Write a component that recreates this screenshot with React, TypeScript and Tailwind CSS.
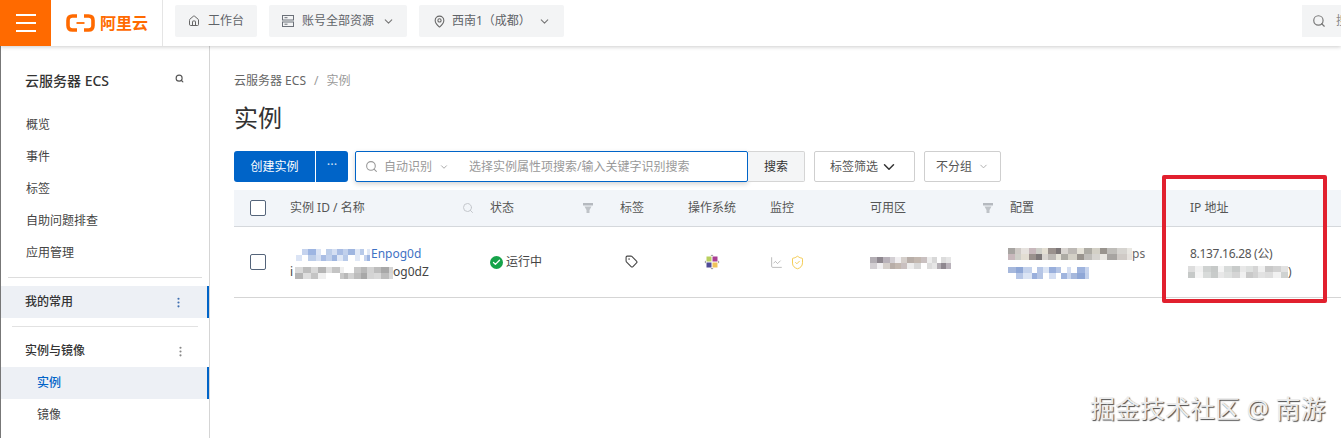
import React from 'react';
import { ChevronDown, EllipsisVertical, House, MapPin, Search, Tag, ChartLine, ShieldCheck, Check } from 'lucide-react';

const FONT = "font-['Noto_Sans','Noto_Sans_CJK_SC',sans-serif]";

type Cell = [number, string];

// pixelated patches that cover the private values in the screenshot
const Mosaic = ({ cells }: { cells: Cell[] }) => {
  const shifted = cells.map(([w], i) => [w, cells[(i + 3) % cells.length][1]] as Cell);
  return (
    <span className="inline-flex flex-col blur-[0.6px] align-middle">
      {[cells, shifted].map((row, r) => (
        <span key={r} className="flex">
          {row.map(([w, c], i) => (
            <span key={i} className="h-[6px]" style={{ width: w, backgroundColor: c }} />
          ))}
        </span>
      ))}
    </span>
  );
};

const nameCells: Cell[] = [
  [6, '#fff'], [6, '#c5d3ee'], [8, '#9db5e2'], [5, '#dbe4f5'], [5, '#fff'], [6, '#bccde9'], [5, '#d5dff2'], [6, '#a9bde4'], [5, '#c2d1ec'], [7, '#9fb6e0'], [5, '#e0e8f6'], [4, '#b8cae9'], [3, '#fff'], [3, '#e0e8f6'],
];
const idCells: Cell[] = [
  [8, '#d9d9d9'], [8, '#bdbdbd'], [7, '#d8d8d8'], [8, '#b5b5b5'], [6, '#dedede'], [8, '#c4c4c4'], [4, '#efefef'], [4, '#fff'], [6, '#fff'], [7, '#c8c8c8'], [6, '#b8b8b8'], [7, '#d2d2d2'], [7, '#bdbdbd'], [8, '#a8a8a8'], [4, '#d4d4d4'],
];
const zoneCells: Cell[] = [
  [7, '#b3aeb4'], [6, '#8e878f'], [7, '#b9b2ba'], [5, '#d3cfd3'], [6, '#f1eff1'], [6, '#d5cfcb'], [7, '#b8aea8'], [7, '#c3b8b0'], [6, '#c9c0c0'], [5, '#ededed'], [5, '#d8d8d8'], [4, '#fff'], [5, '#dcdcdc'], [5, '#e6e6e6'],
];
const configCells: Cell[] = [
  [7, '#a7a4a1'], [6, '#cfcac6'], [8, '#e6e2de'], [7, '#c8b8bc'], [6, '#cfcfc9'], [6, '#e3ded3'], [8, '#9a918d'], [5, '#7d7778'], [7, '#d8d4d0'], [9, '#bdb9b5'], [7, '#e5e2d8'], [8, '#adaba4'], [8, '#d3d0c6'], [7, '#99948e'], [10, '#bfbdb9'], [10, '#d6d4d0'], [5, '#e9e7e2'],
];
const configCells2: Cell[] = [
  [8, '#a6b8dc'], [7, '#8fa7d6'], [9, '#c4d2ec'], [5, '#fff'], [6, '#b6c6e6'], [6, '#dbe4f4'], [7, '#99afdc'], [5, '#b5c5e5'], [6, '#fff'], [4, '#d4def2'], [6, '#fff'], [8, '#9fb4de'], [4, '#c8d5ee'],
];
const ipCells: Cell[] = [
  [7, '#dddddd'], [8, '#f1f1f1'], [8, '#cfd2d1'], [7, '#c6c9c8'], [6, '#f5f5f5'], [8, '#d8dbda'], [8, '#c8cbca'], [6, '#e8e8e8'], [7, '#dfe1e0'], [5, '#d5d5d5'], [7, '#f0f0f0'], [8, '#c9c9c9'], [8, '#d2d2d2'], [7, '#e2e2e2'],
];

const Funnel = () => (
  <svg width="12" height="12" viewBox="0 0 12 12" className="shrink-0">
    <path d="M1 1h10v2.5H1z" fill="#b5b9bf" />
    <path d="M2.500 4.500h7L7.500 8v3h-3V8z" fill="#bfc3c8" />
  </svg>
);

const ServerGlyph = () => (
  <svg width="14" height="14" viewBox="0 0 14 14" fill="none" stroke="#6b7078" strokeWidth="1">
    <rect x="1.500" y="1.500" width="11" height="4.500" />
    <rect x="1.500" y="8" width="11" height="4.500" />
    <path d="M3.500 3.700h3M3.500 10.200h3" />
  </svg>
);

const CentosGlyph = () => (
  <svg width="16" height="16" viewBox="0 0 16 16">
    <path d="M8 0.500l1.500 1.500h-3z M8 15.500l1.500-1.500h-3z M0.500 8l1.500-1.500v3z M15.500 8l-1.500-1.500v3z" fill="#9a9a9a" />
    <rect x="2.500" y="2.500" width="5" height="5" fill="#b9cf5e" />
    <rect x="8.500" y="2.500" width="5" height="5" fill="#a93f93" />
    <rect x="2.500" y="8.500" width="5" height="5" fill="#4f4a96" />
    <rect x="8.500" y="8.500" width="5" height="5" fill="#efc35a" />
  </svg>
);

const Logo = () => (
  <div className="flex items-center gap-[5px] text-[#ff6a00]">
    <svg width="29" height="18" viewBox="0 0 29 18" fill="none" stroke="currentColor" strokeWidth="3.600">
      <path d="M11 2H6.500Q2 2 2 6.500v5Q2 16 6.500 16H11" />
      <path d="M18 2h4.500Q27 2 27 6.500v5Q27 16 22.500 16H18" />
      <path d="M10.500 9h8" strokeWidth="1.800" />
    </svg>
    <span className="text-base leading-none font-bold">阿里云</span>
  </div>
);

const TopButton = ({ icon, label, chevron, className }: { icon: React.ReactNode; label: string; chevron?: boolean; className: string }) => (
  <div className={`h-8 flex items-center bg-[#f3f4f5] rounded-[2px] text-xs text-[#5f6368] ${className}`}>
    {icon}
    <span>{label}</span>
    {chevron && <ChevronDown size={13} className="ml-auto text-[#777]" />}
  </div>
);

const SideItem = ({ label }: { label: string }) => (
  <div className="h-8 pl-[25px] flex items-center text-xs text-[#444]">{label}</div>
);

const Sidebar = () => (
  <aside className="w-[210px] shrink-0 border-r border-[#d5d5d5] border-l border-l-[#777] pt-5">
    <div className="h-[30px] pl-6 pr-[25px] flex items-center justify-between">
      <span className="text-sm font-medium text-[#333]">云服务器 ECS</span>
      <Search size={9} strokeWidth={3} className="text-[#555] -translate-y-[3px]" />
    </div>
    <div className="mt-[13px]">
      <SideItem label="概览" />
      <SideItem label="事件" />
      <SideItem label="标签" />
      <SideItem label="自助问题排查" />
      <SideItem label="应用管理" />
    </div>
    <div className="mt-2 mx-[7px] border-t border-[#ddd]" />
    <div className="mt-2 h-8 pl-6 pr-[22px] flex items-center justify-between bg-[#edf0f5] border-r-2 border-[#0064c8] text-xs font-medium text-[#333]">
      <span>我的常用</span>
      <EllipsisVertical size={13} className="text-[#3f6fb0]" />
    </div>
    <div className="mt-2 mx-[11px] border-t border-[#e2e2e2]" />
    <div className="mt-2 h-8 pl-6 pr-[22px] flex items-center justify-between text-xs font-medium text-[#333]">
      <span>实例与镜像</span>
      <EllipsisVertical size={13} className="text-[#888]" />
    </div>
    <div className="h-8 pl-9 flex items-center bg-[#edf0f5] border-r-2 border-[#0064c8] text-xs font-medium text-[#0064c8]">实例</div>
    <div className="h-8 pl-9 flex items-center text-xs text-[#444]">镜像</div>
  </aside>
);

const Toolbar = () => (
  <div className="mt-[15px] h-[31px] flex text-xs">
    <div className="w-[81px] bg-[#0064c8] rounded-l-[3px] flex items-center justify-center text-white">创建实例</div>
    <div className="ml-px w-[32px] bg-[#0064c8] rounded-r-[3px] flex items-center justify-center text-[#cfe0f5] text-[13px] leading-none pb-1">···</div>
    <div className="ml-[7px] w-[393px] bg-white border border-[#0064c8] rounded-[2px] shadow-[0_2px_5px_rgba(0,0,0,0.18)] flex items-center text-[#999]">
      <Search size={13} className="ml-[9px] text-[#999]" />
      <span className="ml-[6px]">自动识别</span>
      <ChevronDown size={10} className="ml-[7px]" />
      <span className="ml-[20px]">选择实例属性项搜索/输入关键字识别搜索</span>
    </div>
    <div className="w-[57px] bg-[#f4f5f6] border border-[#d5d5d5] border-l-0 rounded-r-[2px] flex items-center justify-center text-[#333]">搜索</div>
    <div className="ml-[9px] w-[101px] pl-[15px] border border-[#cfcfcf] rounded-[2px] flex items-center gap-[1px] text-[#555]">
      标签筛选
      <ChevronDown size={18} className="ml-[1px] text-[#333]" />
    </div>
    <div className="ml-[9px] w-[77px] border border-[#cfcfcf] rounded-[2px] flex items-center justify-center gap-[6px] text-[#555]">
      不分组
      <ChevronDown size={11} className="text-[#aaa]" />
    </div>
  </div>
);

const COLS = 'grid grid-cols-[56px_200px_130px_68px_82px_100px_140px_180px_1fr] text-xs';

const Checkbox = () => (
  <div className="w-[16px] h-[16px] ml-4 border border-[#54647a] rounded-[2px] bg-white" />
);

const InstanceTable = () => (
  <div className="mt-2">
    <div className={`${COLS} h-[37px] bg-[#f2f5f9] border-b border-[#d5d8dc] items-center text-[#555]`}>
      <Checkbox />
      <div className="flex items-center justify-between pr-[16px]">
        <span>实例 ID / 名称</span>
        <Search size={12} className="text-[#c4c7cc]" />
      </div>
      <div className="flex items-center justify-between pr-[26px]">
        <span>状态</span>
        <Funnel />
      </div>
      <div>标签</div>
      <div>操作系统</div>
      <div>监控</div>
      <div className="flex items-center justify-between pr-[16px]">
        <span>可用区</span>
        <Funnel />
      </div>
      <div>配置</div>
      <div>IP 地址</div>
    </div>
    <div className={`${COLS} h-[71px] border-b border-[#d5d5d5] items-center text-[#555]`}>
      <Checkbox />
      <div className="leading-[18px] pt-[2px]">
        <div className="flex items-center text-[#3f72c4]">
          <span className="ml-[6px]"><Mosaic cells={nameCells} /></span>
          <span className="ml-px">Enpog0d</span>
        </div>
        <div className="flex items-center text-[#444]">
          <span>i</span>
          <span className="ml-[2px]"><Mosaic cells={idCells} /></span>
          <span>og0dZ</span>
        </div>
      </div>
      <div className="flex items-center gap-[3px] text-[#444]">
        <span className="w-[13px] h-[13px] rounded-full bg-[#16a34a] flex items-center justify-center">
          <Check size={9} strokeWidth={3.5} className="text-white" />
        </span>
        运行中
      </div>
      <div className="pl-[5px] pb-[2px]"><Tag size={13} className="text-[#444]" /></div>
      <div className="pl-4"><CentosGlyph /></div>
      <div className="flex items-center gap-[7px]">
        <ChartLine size={13} strokeWidth={1.2} className="text-[#999]" />
        <ShieldCheck size={15} strokeWidth={1.3} className="text-[#f2c230]" />
      </div>
      <div><Mosaic cells={zoneCells} /></div>
      <div className="-ml-[2px] leading-[18px] pt-[2px]">
        <div className="flex items-center text-[#666]">
          <Mosaic cells={configCells} />
          <span>ps</span>
        </div>
        <Mosaic cells={configCells2} />
      </div>
      <div className="leading-[18px] pt-[2px]">
        <div className="tracking-[-0.3px]">8.137.16.28 (公)</div>
        <div className="flex items-center -ml-[2px]">
          <Mosaic cells={ipCells} />
          <span>)</span>
        </div>
      </div>
    </div>
  </div>
);

export default function App() {
  return (
    <div className={`relative w-[1341px] h-[438px] overflow-hidden bg-white ${FONT}`}>
      <header className="relative z-10 h-[46px] flex items-center bg-white shadow-[0_1px_4px_rgba(0,0,0,0.2)]">
        <div className="w-[51px] h-full bg-[#ff6a00] flex flex-col items-center justify-center gap-[6px] shrink-0">
          <span className="w-[20px] h-[2px] bg-white" />
          <span className="w-[20px] h-[2px] bg-white" />
          <span className="w-[20px] h-[2px] bg-white" />
        </div>
        <div className="w-[112px] h-full pl-[15px] flex items-center border-r border-[#e5e5e5] shrink-0">
          <Logo />
        </div>
        <div className="ml-3 mb-[4px] flex gap-3">
          <TopButton className="w-[82px] pl-[13px] gap-[8px]" icon={<House size={12} className="text-[#666]" />} label="工作台" />
          <TopButton className="w-[138px] pl-[12px] pr-[12px] gap-[7px]" icon={<ServerGlyph />} label="账号全部资源" chevron />
          <TopButton className="w-[145px] pl-[14px] pr-[13px] gap-[6px]" icon={<MapPin size={13} className="text-[#666]" />} label="西南1（成都）" chevron />
        </div>
        <div className="ml-auto mb-[4px] w-[39px] h-8 bg-[#f3f4f5] flex items-center pl-[10px] gap-[10px] overflow-hidden text-xs text-[#888] whitespace-nowrap">
          <Search size={14} className="text-[#777] shrink-0" />
          <span>搜索</span>
        </div>
      </header>

      <div className="flex h-[392px]">
        <Sidebar />
        <main className="flex-1 min-w-0 pl-6">
          <div className="mt-[27px] h-4 flex items-center gap-2 text-xs leading-none">
            <span className="text-[#666]">云服务器 ECS</span>
            <span className="text-[#999]">/</span>
            <span className="text-[#999]">实例</span>
          </div>
          <h1 className="mt-[11px] h-9 flex items-center text-2xl text-[#333]">实例</h1>
          <Toolbar />
          <InstanceTable />
        </main>
      </div>

      {/* red annotation box drawn over the IP column */}
      <div className="absolute left-[1162px] top-[175px] w-[165px] h-[128px] border-4 border-[#e1202e] rounded-[2px]" />

      {/* site watermark */}
      <div className="absolute left-[1090px] top-[390px] text-[25px] leading-9 whitespace-nowrap text-[#ececec] [text-shadow:1px_1px_1px_#4a4a4a]">
        掘金技术社区 @ 南游
      </div>
    </div>
  );
}
